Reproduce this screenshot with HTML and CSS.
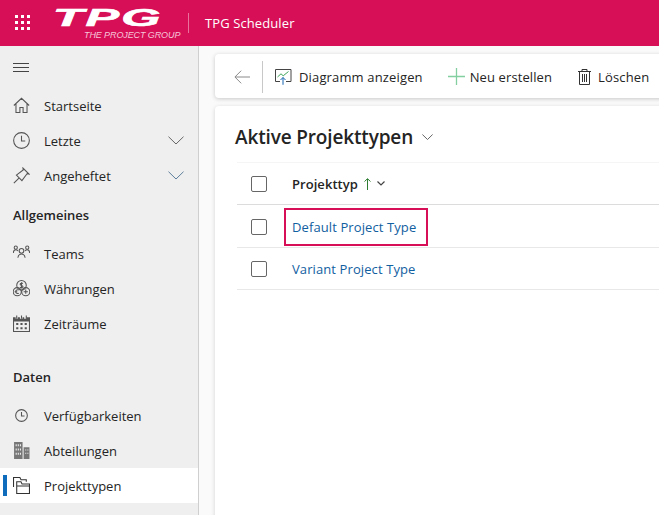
FILE: index.html
```html
<!DOCTYPE html>
<html lang="de">
<head>
    <meta charset="UTF-8">
    <meta name="viewport" content="width=device-width, initial-scale=1.0">
    <title>TPG Scheduler</title>
    <link rel="stylesheet" href="styles.css">
</head>
<body>
    <header class="topbar">
        <svg class="waffle" width="16" height="16" viewBox="0 0 16 16" fill="#fff">
            <rect x="0" y="0" width="3" height="3"/><rect x="6" y="0" width="3" height="3"/><rect x="12" y="0" width="3" height="3"/>
            <rect x="0" y="6" width="3" height="3"/><rect x="6" y="6" width="3" height="3"/><rect x="12" y="6" width="3" height="3"/>
            <rect x="0" y="12" width="3" height="3"/><rect x="6" y="12" width="3" height="3"/><rect x="12" y="12" width="3" height="3"/>
        </svg>
        <div class="logo">
            <span class="logo-mark">TPG</span>
            <span class="logo-sub">THE PROJECT GROUP</span>
        </div>
        <span class="app-name">TPG Scheduler</span>
    </header>

    <div class="layout">
        <nav class="sidebar">
            <button class="burger">
                <svg width="16" height="10" viewBox="0 0 16 10" stroke="#444" fill="none"><path d="M0 .5h16M0 4.500h16M0 8.500h16"/></svg>
            </button>
            <a class="nav-item">
                <svg class="nav-icon" viewBox="0 0 16 16" fill="none" stroke="#555"><path d="M.8 8 8 1.200 15.200 8M2.800 6.400v8.100h3.700V9.800h3v4.700h3.700V6.400"/></svg>
                <span>Startseite</span>
            </a>
            <a class="nav-item">
                <svg class="nav-icon" viewBox="0 0 16 16" fill="none" stroke="#555"><circle cx="8" cy="8" r="7.400"/><path d="M8 3.500V8.500H11.500"/></svg>
                <span>Letzte</span>
                <svg class="chev" viewBox="0 0 16 9" fill="none" stroke="#666"><path d="M.5.7 8 8 15.500.7"/></svg>
            </a>
            <a class="nav-item">
                <svg class="nav-icon" viewBox="0 0 16 16" fill="none" stroke="#555"><path d="M.8 15.200 5.600 10.400M3.200 7.600 9.600 2.800 9.400 1 15 6.600 13.200 6.400 8.400 12.800Z"/></svg>
                <span>Angeheftet</span>
                <svg class="chev" viewBox="0 0 16 9" fill="none" stroke="#5d7f9d"><path d="M.5.7 8 8 15.500.7"/></svg>
            </a>

            <h3 class="nav-group first">Allgemeines</h3>
            <a class="nav-item">
                <svg class="nav-icon" viewBox="0 0 16 16" fill="none" stroke="#555"><circle cx="8" cy="5.500" r="2.200"/><path d="M4.600 12c.3-2.400 1.500-3.600 3.400-3.600s3.100 1.200 3.400 3.600"/><circle cx="2.600" cy="2.500" r="1.500"/><circle cx="13.400" cy="2.500" r="1.500"/><path d="M.3 7.500c0-2 1-3 2.300-3 .8 0 1.500.4 2 1.100M15.700 7.500c0-2-1-3-2.300-3-.8 0-1.500.4-2 1.100"/></svg>
                <span>Teams</span>
            </a>
            <a class="nav-item">
                <svg class="nav-icon" viewBox="0 0 16 16" fill="none" stroke="#555"><circle cx="8" cy="5" r="4.500"/><circle cx="4" cy="11" r="3.800"/><circle cx="12" cy="11" r="3.800"/><path d="M9.300 3.300C8.600 2.700 6.700 2.800 6.700 4c0 1.500 2.700.7 2.700 2.200 0 1.100-1.900 1.300-2.800.6M8 2v6M5.400 9.500c-1-.6-2.900-.1-2.900 1.500s1.900 2.100 2.900 1.500M1.500 11h2.500M12 9v4M10 11h4"/></svg>
                <span>Währungen</span>
            </a>
            <a class="nav-item">
                <svg class="nav-icon" viewBox="0 0 16 16" fill="#555" stroke="none"><path d="M0 2h2.500v1.500h2V2h2v1.500h2.500V2h1.500v1.500h2V2H16v14H0Zm1 4v9h14V6Z"/><path d="M3 .5h1v3H3zM7.500.5h1v3h-1zM12 .5h1v3h-1z"/><path d="M3 7.500h2v2H3zM7 7.500h2v2H7zM11 7.500h2v2h-2zM3 11.500h2v2H3zM7 11.500h2v2H7zM11 11.500h2v2h-2z"/></svg>
                <span>Zeiträume</span>
            </a>

            <h3 class="nav-group second">Daten</h3>
            <a class="nav-item">
                <svg class="nav-icon small" viewBox="0 0 12 12" fill="none" stroke="#555"><circle cx="6" cy="6" r="5.400"/><path d="M6 2.700v3.800h2.800"/></svg>
                <span>Verfügbarkeiten</span>
            </a>
            <a class="nav-item">
                <svg class="nav-icon" viewBox="0 0 16 16" fill="#777" stroke="none"><path d="M1 0h8v16H1zM10 5h5.500v11H10z"/><path fill="#efefef" d="M2.500 2h1v2h-1zM4.500 2h1v2h-1zM6.500 2h1v2h-1zM2.500 6h1v2h-1zM4.500 6h1v2h-1zM6.500 6h1v2h-1zM2.500 10h1v2h-1zM4.500 10h1v2h-1zM6.500 10h1v2h-1zM11.500 7h1v1h-1zM13.500 7h1v1h-1zM11.500 10h1v1h-1zM13.500 10h1v1h-1z"/></svg>
                <span>Abteilungen</span>
            </a>
            <a class="nav-item active">
                <svg class="nav-icon" viewBox="0 0 16 16" fill="none" stroke="#333"><path d="M.5 9.500V.5h6l1 2h5v2"/><path d="M3.500 15.500v-11h4l1 2h7v9h-12ZM3.500 8.500h12"/></svg>
                <span>Projekttypen</span>
            </a>
        </nav>

        <main class="main">
            <div class="toolbar">
                <button class="tool back">
                    <svg width="16" height="14" viewBox="0 0 16 14" fill="none" stroke="#8a8a8a"><path d="M7.200.7.900 7l6.300 6.300M1 7h15"/></svg>
                </button>
                <span class="tool-sep"></span>
                <button class="tool">
                    <svg width="17" height="16" viewBox="0 0 17 16" fill="none"><path stroke="#444" d="M5 12.500H.5V.5h15.500v12H11"/><path stroke="#3fa55b" d="M2.500 8 6 4.800l2.200 2L13.500 2.500"/><path stroke="#1767b3" d="M8 15.800V8.500M5.500 11 8 8.500l2.500 2.500"/></svg>
                    <span>Diagramm anzeigen</span>
                </button>
                <button class="tool tool-new">
                    <svg width="17" height="17" viewBox="0 0 17 17" fill="none" stroke="#83cf9f" stroke-width="1.300"><path d="M8.500 0v17M0 8.500h17"/></svg>
                    <span>Neu erstellen</span>
                </button>
                <button class="tool tool-delete">
                    <svg width="13" height="16" viewBox="0 0 13 16" fill="none" stroke="#333"><path d="M0 2.500h13M4 2.500V.5h5v2M1.500 2.500v13h10v-13M4.500 5v8M6.500 5v8M8.500 5v8"/></svg>
                    <span>Löschen</span>
                </button>
            </div>

            <section class="content">
                <h1 class="view-title">
                    Aktive Projekttypen
                    <svg width="11" height="6" viewBox="0 0 11 6" fill="none" stroke="#666"><path d="M.4.5 5.500 5.500 10.600.5"/></svg>
                </h1>
                <div class="grid">
                    <div class="grid-row grid-head">
                        <span class="check"></span>
                        <div class="col-name">
                            <span>Projekttyp</span>
                            <svg width="7" height="12" viewBox="0 0 7 12" fill="none" stroke="#2e7d32"><path d="M.5 3.500 3.500.7l3 2.800M3.500 1v11"/></svg>
                            <svg width="8" height="5" viewBox="0 0 8 5" fill="none" stroke="#444" stroke-width="1.200"><path d="M.5.5 4 4 7.500.5"/></svg>
                        </div>
                    </div>
                    <div class="grid-row first-row">
                        <span class="check"></span>
                        <a class="row-link marked">Default Project Type</a>
                    </div>
                    <div class="grid-row">
                        <span class="check"></span>
                        <a class="row-link">Variant Project Type</a>
                    </div>
                </div>
            </section>
        </main>
    </div>
</body>
</html>
```

FILE: styles.css
```css
* {
    box-sizing: border-box;
}

html, body {
    height: 100%;
}

body {
    margin: 0;
    overflow: hidden;
    font-family: 'Open Sans', 'Noto Sans', Arial, sans-serif;
    font-size: 13px;
    color: #242424;
    background-color: #fafafa;
}

button {
    font: inherit;
    color: inherit;
    background: none;
    border: none;
    padding: 0;
}

.topbar {
    display: flex;
    align-items: center;
    height: 46px;
    background-color: #d70f57;
    color: white;
}

.waffle {
    margin-left: 15px;
    flex: none;
}

.logo {
    display: flex;
    flex-direction: column;
    width: 131px;
    margin-left: 25px;
    padding-top: 2px;
    line-height: 1;
}

.logo-mark {
    font-family: 'Liberation Sans', Arial, sans-serif;
    font-weight: bold;
    font-style: italic;
    font-size: 24px;
    height: 19px;
    line-height: 19px;
    letter-spacing: 1px;
    transform: scaleX(2.1);
    transform-origin: 3px center;
    -webkit-text-stroke: 0.6px white;
}

.logo-sub {
    font-family: 'Liberation Sans', Arial, sans-serif;
    font-style: italic;
    font-size: 9px;
    margin-top: 4px;
    margin-left: 28px;
    letter-spacing: -0.1px;
    white-space: nowrap;
    color: #f6c6d8;
}

.app-name {
    margin-left: 1px;
    padding-left: 16px;
    height: 20px;
    line-height: 20px;
    border-left: 1px solid #e8729c;
    font-size: 13px;
    letter-spacing: 0.1px;
    white-space: nowrap;
}

.layout {
    display: flex;
    height: 469px;
}

.sidebar {
    flex: none;
    width: 199px;
    background-color: #efefef;
    border-right: 1px solid #cfcfcf;
}

.burger {
    display: flex;
    align-items: center;
    height: 42px;
    padding-top: 2px;
    padding-left: 13px;
}

.nav-item {
    display: flex;
    align-items: center;
    height: 35px;
    padding-left: 13px;
    padding-right: 14px;
}

.nav-item span {
    margin-left: 14px;
}

.nav-icon {
    width: 17px;
    height: 17px;
    flex: none;
}

.nav-icon.small {
    width: 13px;
    height: 13px;
    margin: 0 2px;
}

.chev {
    width: 16px;
    height: 9px;
    margin-left: auto;
}

.nav-item.active {
    position: relative;
    background-color: white;
}

.nav-item.active::before {
    content: "";
    position: absolute;
    left: 3px;
    top: 7px;
    width: 4px;
    height: 21px;
    background-color: #0f6cbd;
}

.nav-group {
    margin: 0;
    padding-left: 13px;
    font-size: 13px;
    font-weight: 600;
    line-height: 18px;
}

.nav-group.first {
    padding-top: 13px;
    padding-bottom: 12px;
}

.nav-group.second {
    padding-top: 27px;
    padding-bottom: 12px;
}

.main {
    flex: 1;
    min-width: 0;
    padding: 8px 0 0 16px;
}

.toolbar {
    display: flex;
    align-items: center;
    width: 600px;
    height: 44px;
    padding-top: 1px;
    background-color: white;
    border-radius: 4px;
    box-shadow: 0 1px 4px rgba(0, 0, 0, 0.2);
}

.tool {
    display: flex;
    align-items: center;
    gap: 7px;
    margin-right: 25px;
    letter-spacing: 0.15px;
    white-space: nowrap;
}

.tool-new {
    gap: 5px;
    letter-spacing: 0.1px;
}

.tool-delete {
    margin-left: 1px;
}

.tool.back {
    margin-left: 19px;
    margin-right: 12px;
}

.tool-sep {
    width: 1px;
    height: 32px;
    background-color: #c8c8c8;
    margin-right: 12px;
}

.content {
    height: 420px;
    width: 600px;
    margin-top: 8px;
    background-color: white;
    border-radius: 4px 4px 0 0;
    box-shadow: 0 1px 4px rgba(0, 0, 0, 0.16);
}

.view-title {
    display: flex;
    align-items: center;
    gap: 9px;
    height: 56px;
    margin: 0;
    padding: 6px 0 0 20px;
    font-size: 19px;
    font-weight: 600;
    letter-spacing: -0.15px;
}

.grid {
    margin-left: 22px;
    border-top: 1px solid #f5f5f5;
}

.grid-row {
    display: flex;
    align-items: center;
    height: 42px;
    padding-top: 1px;
    border-bottom: 1px solid #e8e8e8;
    padding-left: 14px;
}

.grid-head {
    padding-top: 0;
    border-bottom-color: #dcdcdc;
}

.first-row {
    height: 43px;
    padding-top: 2px;
}

.check {
    width: 16px;
    height: 16px;
    flex: none;
    border: 1px solid #666;
    border-radius: 2px;
}

.col-name {
    display: flex;
    align-items: center;
    gap: 6px;
    margin-left: 25px;
    font-size: 13px;
    font-weight: 600;
    letter-spacing: 0.05px;
}

.row-link {
    margin-left: 17px;
    padding: 0 10px 0 8px;
    color: #11609f;
    letter-spacing: 0.1px;
    white-space: nowrap;
}

.row-link.marked {
    display: flex;
    align-items: center;
    height: 38px;
    padding-left: 6px;
    padding-right: 10px;
    border: 2px solid #d70f57;
}
```
